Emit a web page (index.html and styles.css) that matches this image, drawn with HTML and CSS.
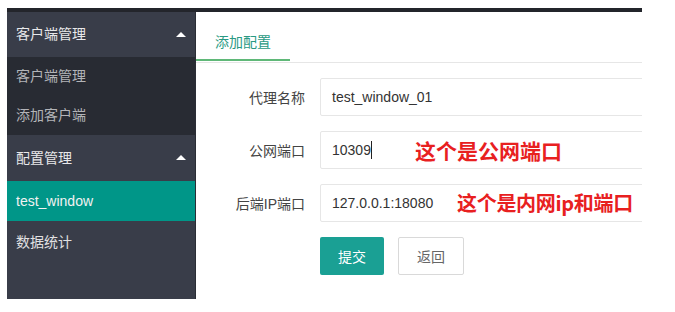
FILE: index.html
```html
<!DOCTYPE html>
<html>
<head>
<meta charset="utf-8">
<link rel="stylesheet" href="styles.css">
</head>
<body>
<div class="frame">
  <div class="topbar"></div>
  <div class="body">
    <nav class="side">
      <div class="group-head">客户端管理<span class="tri"></span></div>
      <div class="group-items">
        <div class="item">客户端管理</div>
        <div class="item">添加客户端</div>
      </div>
      <div class="group-head head2">配置管理<span class="tri"></span></div>
      <div class="item active">test_window</div>
      <div class="item plain">数据统计</div>
    </nav>
    <main class="main">
      <div class="tabs"><div class="tab">添加配置</div></div>
      <div class="form">
        <div class="row">
          <label class="label">代理名称</label>
          <div class="input">test_window_01</div>
        </div>
        <div class="row">
          <label class="label">公网端口</label>
          <div class="input">10309<span class="caret"></span><span class="note note1">这个是公网端口</span></div>
        </div>
        <div class="row">
          <label class="label">后端IP端口</label>
          <div class="input">127.0.0.1:18080<span class="note note2">这个是内网ip和端口</span></div>
        </div>
        <div class="row">
          <span class="label"></span>
          <div class="buttons">
            <button class="btn primary">提交</button>
            <button class="btn ghost">返回</button>
          </div>
        </div>
      </div>
    </main>
  </div>
</div>
</body>
</html>
```
FILE: styles.css
```css
html, body {
  margin: 0;
  padding: 0;
  background: #ffffff;
}
body {
  width: 675px;
  height: 312px;
  overflow: hidden;
  font-family: "Liberation Sans", "Noto Sans CJK SC", sans-serif;
  font-size: 14px;
}
.frame {
  margin: 8px 0 0 7px;
  width: 635px;
  height: 291px;
  display: flex;
  flex-direction: column;
}
.topbar {
  height: 4px;
  background: #23252b;
  flex: none;
}
.body {
  flex: 1;
  display: flex;
  min-height: 0;
}
.side {
  width: 188px;
  flex: none;
  background: #393d49;
  border-right: 1px solid #2a2d35;
  display: flex;
  flex-direction: column;
}
.group-head {
  height: 45px;
  line-height: 45px;
  padding-left: 9px;
  color: #e8e8ea;
  position: relative;
}
.head2 {
  height: 46px;
  line-height: 46px;
}
.tri {
  position: absolute;
  right: 9px;
  top: 50%;
  margin-top: -3px;
  width: 0;
  height: 0;
  border-left: 5px solid transparent;
  border-right: 5px solid transparent;
  border-bottom: 5px solid #ffffff;
}
.group-items {
  background: #282b33;
}
.item {
  height: 39px;
  line-height: 39px;
  padding-left: 9px;
  color: #b3b4b8;
}
.item.active {
  height: 40px;
  line-height: 40px;
  background: #009688;
  color: #f2f2f2;
}
.item.plain {
  height: 42px;
  line-height: 42px;
  color: #e0e0e2;
}
.main {
  flex: 1;
  overflow: hidden;
  background: #ffffff;
}
.tabs {
  margin-top: 10px;
  border-bottom: 1px solid #e6e6e6;
  height: 40px;
}
.tab {
  width: 94px;
  height: 39px;
  line-height: 41px;
  box-sizing: border-box;
  padding-left: 19px;
  color: #2a9a83;
  border-bottom: 2px solid #5fb878;
}
.form {
  padding-top: 15px;
}
.row {
  display: flex;
  align-items: center;
  margin-bottom: 15px;
}
.label {
  width: 109px;
  flex: none;
  text-align: right;
  color: #444;
  box-sizing: border-box;
  padding-right: 0;
  margin-right: 15px;
}
.input {
  position: relative;
  width: 400px;
  flex: none;
  height: 38px;
  line-height: 36px;
  box-sizing: border-box;
  border: 1px solid #e6e6e6;
  border-radius: 2px;
  padding-left: 11px;
  color: #333;
  white-space: nowrap;
}
.caret {
  display: inline-block;
  width: 1px;
  height: 18px;
  background: #222;
  vertical-align: -4px;
}
.note {
  position: absolute;
  top: 0;
  font-family: "Noto Sans CJK SC", sans-serif;
  font-weight: bold;
  font-size: 20px;
  line-height: 36px;
  color: #e8201f;
}
.note1 {
  left: 94px;
  font-size: 21px;
}
.note2 {
  left: 136px;
  letter-spacing: -0.3px;
}
.buttons {
  display: flex;
  gap: 14px;
}
.btn {
  height: 38px;
  font-family: "Liberation Sans", "Noto Sans CJK SC", sans-serif;
  font-size: 14px;
  border-radius: 2px;
  padding: 0;
  cursor: pointer;
}
.primary {
  width: 64px;
  background: #1aa094;
  border: none;
  color: #ffffff;
}
.ghost {
  width: 66px;
  background: #ffffff;
  border: 1px solid #d9d9d9;
  color: #666;
}
```
